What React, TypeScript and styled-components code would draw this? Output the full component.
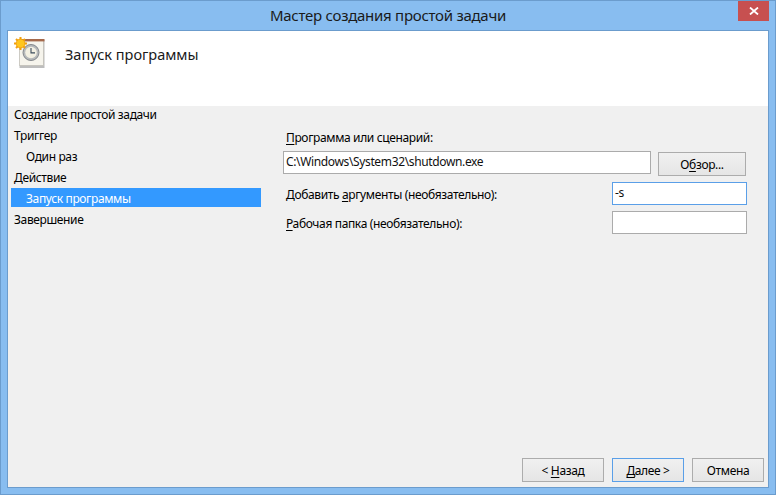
import React from "react";
import styled, { createGlobalStyle } from "styled-components";

const Global = createGlobalStyle`
  html, body { margin: 0; padding: 0; width: 776px; height: 495px; overflow: hidden; background: #88bdf0; }
  #root { width: 776px; height: 495px; }
  * { box-sizing: border-box; }
`;

const Window = styled.div`
  width: 776px;
  height: 495px;
  background: #88bdf0;
  border: 1px solid #6b9ccd;
  display: flex;
  flex-direction: column;
  position: relative;
  font-family: "Noto Sans", "Open Sans", sans-serif;
  font-size: 12px;
  letter-spacing: -0.36px;
  color: #000;
`;

const TitleBar = styled.div`
  height: 29px;
  flex: none;
  display: flex;
  align-items: center;
  justify-content: center;
  padding-bottom: 2px;
  font-size: 15px;
  letter-spacing: -0.27px;
  color: #1a1a1a;
`;

const CloseButton = styled.div`
  position: absolute;
  top: 0;
  right: 6px;
  width: 31px;
  height: 20px;
  background: #c75050;
  display: flex;
  align-items: center;
  justify-content: center;
`;

const Client = styled.div`
  flex: 1;
  margin: 0 6px 6px 6px;
  border: 1px solid #6b9ccd;
  display: flex;
  flex-direction: column;
  background: #f0f0f0;
  min-height: 0;
`;

const Header = styled.div`
  height: 75px;
  flex: none;
  background: #fff;
  display: flex;
  align-items: flex-start;
  padding: 6px 0 0 6px;
`;

const HeaderTitle = styled.div`
  font-size: 14.5px;
  letter-spacing: 0;
  margin: 7px 0 0 19px;
  line-height: 20px;
  color: #1a1a1a;
`;

const Body = styled.div`
  flex: 1;
  display: flex;
  min-height: 0;
`;

const Steps = styled.div`
  width: 275px;
  flex: none;
  margin-top: -2px;
  padding-left: 3px;
`;

const Step = styled.div<{ $indent?: boolean; $active?: boolean }>`
  width: 250px;
  line-height: 21px;
  height: 19px;
  margin-bottom: 2px;
  padding-left: ${(p) => (p.$indent ? "15px" : "3px")};
  background: ${(p) => (p.$active ? "#3399ff" : "transparent")};
  color: ${(p) => (p.$active ? "#fff" : "#000")};
`;

const Main = styled.div`
  flex: 1;
  display: flex;
  flex-direction: column;
  min-width: 0;
`;

const Form = styled.div`
  flex: 1;
  padding-top: 24px;
`;

const Label = styled.div`
  line-height: 16px;
  padding-left: 3px;
`;

const Row = styled.div`
  display: flex;
  align-items: flex-start;
`;

const ProgramRow = styled(Row)`
  margin-top: 5px;
  gap: 7px;
`;

const ArgRow = styled(Row)`
  margin-top: 6px;
  justify-content: space-between;
  width: 464px;
  align-items: center;
  ${Label} {
    margin-top: 2px;
  }
`;

const Input = styled.div<{ $width: number; $focused?: boolean }>`
  width: ${(p) => p.$width}px;
  height: 23px;
  background: #fff;
  border: 1px solid ${(p) => (p.$focused ? "#5a9fe8" : "#ababab")};
  line-height: 20px;
  padding-left: 2px;
  color: #111;
`;

const Btn = styled.div<{ $width: number; $focused?: boolean }>`
  width: ${(p) => p.$width}px;
  height: 24px;
  border: 1px solid ${(p) => (p.$focused ? "#5a9fe8" : "#acacac")};
  background: linear-gradient(#f0f0f0, #e5e5e5);
  display: flex;
  align-items: center;
  justify-content: center;
  white-space: pre;
`;

const BrowseButton = styled(Btn)`
  margin-top: 1px;
`;

const Footer = styled.div`
  flex: none;
  display: flex;
  justify-content: flex-end;
  gap: 8px;
  padding: 0 4px 5px 0;
`;

const U = styled.span`
  text-decoration: underline;
  text-underline-offset: 2px;
`;

const TaskIcon = () => (
  <svg width="32" height="32" viewBox="0 0 32 32" style={{ flex: "none" }}>
    <rect x="5.5" y="3" width="25" height="28" fill="#bdbdbd" />
    <rect x="5.5" y="3" width="24" height="25.5" fill="#f6f4ec" stroke="#b9b7ae" strokeWidth="0.6" />
    <rect x="7" y="2" width="23.5" height="2.4" fill="#a5694b" />
    <circle cx="17" cy="15.5" r="8" fill="#b6b9bb" stroke="#84888c" strokeWidth="1" />
    <circle cx="17" cy="15.5" r="5.8" fill="#f3f0e2" />
    <path d="M17 11V15.9H21" fill="none" stroke="#3d4c5c" strokeWidth="1.1" />
    <g stroke="#f0a010" strokeWidth="2">
      <path d="M6.5 0V13M0 6.5H13M2 2L11 11M11 2L2 11" />
    </g>
    <circle cx="6.5" cy="6.5" r="4.4" fill="#ffc61e" stroke="#f09a08" strokeWidth="0.8" />
  </svg>
);

export default function App() {
  return (
    <>
      <Global />
      <Window>
        <TitleBar>Мастер создания простой задачи</TitleBar>
        <CloseButton>
          <svg width="10" height="8" viewBox="0 0 10 8">
            <path d="M1 0.5L9 7.5M9 0.5L1 7.5" stroke="#fff" strokeWidth="1.8" fill="none" />
          </svg>
        </CloseButton>
        <Client>
          <Header>
            <TaskIcon />
            <HeaderTitle>Запуск программы</HeaderTitle>
          </Header>
          <Body>
            <Steps>
              <Step>Создание простой задачи</Step>
              <Step>Триггер</Step>
              <Step $indent>Один раз</Step>
              <Step>Действие</Step>
              <Step $indent $active>Запуск программы</Step>
              <Step>Завершение</Step>
            </Steps>
            <Main>
              <Form>
                <Label><U>П</U>рограмма или сценарий:</Label>
                <ProgramRow>
                  <Input $width={368}>C:\Windows\System32\shutdown.exe</Input>
                  <BrowseButton $width={88}><span>О<U>б</U>зор...</span></BrowseButton>
                </ProgramRow>
                <ArgRow>
                  <Label>Добавить <U>а</U>ргументы (необязательно):</Label>
                  <Input $width={135} $focused>-s</Input>
                </ArgRow>
                <ArgRow>
                  <Label><U>Р</U>абочая папка (необязательно):</Label>
                  <Input $width={135} />
                </ArgRow>
              </Form>
              <Footer>
                <Btn $width={82}><span>{"< "}<U>Н</U>азад</span></Btn>
                <Btn $width={72} $focused><span><U>Д</U>алее {">"}</span></Btn>
                <Btn $width={72}>Отмена</Btn>
              </Footer>
            </Main>
          </Body>
        </Client>
      </Window>
    </>
  );
}
